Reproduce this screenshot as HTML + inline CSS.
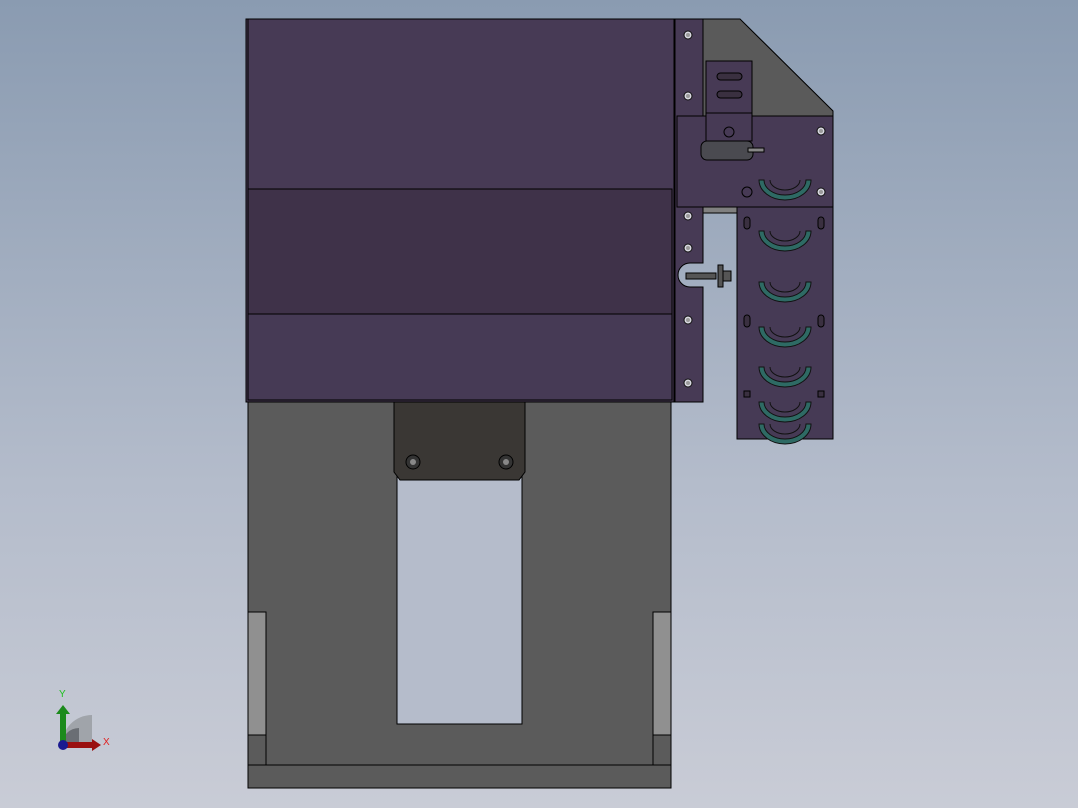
<!DOCTYPE html>
<html><head><style>
html,body{margin:0;padding:0;width:1078px;height:808px;overflow:hidden}
body{background:linear-gradient(#8a9bb1,#b4bccb 60%,#c9ccd6)}
svg{position:absolute;left:0;top:0}
</style></head><body>
<svg width="1078" height="808" viewBox="0 0 1078 808">
<defs>
<g id="arc"><path d="M-26,-8 A26,20 0 0 0 26,-8 L21,-8 A21,15 0 0 1 -21,-8Z" fill="#2e6a64" stroke="#111" stroke-width="1"/><path d="M-15,-8 A15,10 0 0 0 15,-8" fill="none" stroke="#111"/></g>
<g id="hole"><circle r="4" fill="#d8d8e0" stroke="#111"/><circle r="2" fill="#999"/></g>
</defs>
<!-- gray base -->
<rect x="248" y="402" width="423" height="386" fill="#5b5b5b" stroke="#000"/>
<line x1="248" y1="765" x2="671" y2="765" stroke="#000"/>
<rect x="248" y="612" width="18" height="123" fill="#909090" stroke="#000"/>
<rect x="248" y="735" width="18" height="30" fill="none" stroke="#000"/>
<rect x="653" y="612" width="18" height="123" fill="#909090" stroke="#000"/>
<rect x="653" y="735" width="18" height="30" fill="none" stroke="#000"/>
<rect x="397" y="470" width="125" height="254" fill="#b5bccb" stroke="#000"/>
<path d="M394,402 H525 V472 L519,480 H400 L394,472Z" fill="#3a3734" stroke="#000"/>
<circle cx="413" cy="462" r="7" fill="#333" stroke="#000"/><circle cx="413" cy="462" r="3" fill="#888"/>
<circle cx="506" cy="462" r="7" fill="#333" stroke="#000"/><circle cx="506" cy="462" r="3" fill="#888"/>
<!-- purple block -->
<rect x="246" y="19" width="428" height="383" fill="#473a55" stroke="#000"/>
<rect x="248" y="189" width="424" height="125" fill="#3f3249" stroke="#000"/>
<rect x="248" y="314" width="424" height="86" fill="#463a55" stroke="#000"/>
<line x1="248" y1="19" x2="248" y2="400" stroke="#000"/>
<!-- right gray triangle -->
<path d="M700,19 H740 L833,111 V120 H700Z" fill="#5a5a5a" stroke="#000"/>
<!-- vertical strip -->
<path d="M675,19 H703 V263 H690 A12,12 0 0 0 690,287 H703 V402 H675Z" fill="#473a55" stroke="#000"/>
<use href="#hole" x="688" y="35"/><use href="#hole" x="688" y="96"/><use href="#hole" x="688" y="216"/><use href="#hole" x="688" y="248"/><use href="#hole" x="688" y="320"/><use href="#hole" x="688" y="383"/>
<!-- upper plate -->
<rect x="677" y="116" width="156" height="91" fill="#473a55" stroke="#000"/>
<rect x="703" y="207" width="34" height="6" fill="#808080" stroke="#000"/>
<rect x="706" y="61" width="46" height="80" fill="#473a55" stroke="#000"/>
<line x1="706" y1="113" x2="752" y2="113" stroke="#000"/>
<rect x="717" y="73" width="25" height="7" rx="3.5" fill="#3a3040" stroke="#000"/>
<rect x="717" y="91" width="25" height="7" rx="3.5" fill="#3a3040" stroke="#000"/>
<circle cx="729" cy="132" r="5" fill="none" stroke="#000"/>
<rect x="701" y="141" width="52" height="19" rx="6" fill="#4a4a50" stroke="#000"/>
<rect x="748" y="148" width="16" height="4" fill="#888" stroke="#000"/>
<use href="#hole" x="821" y="131"/><use href="#hole" x="821" y="192"/>
<circle cx="747" cy="192" r="5" fill="none" stroke="#000"/>
<use href="#arc" x="785" y="188"/>
<!-- lower plate -->
<rect x="737" y="207" width="96" height="232" fill="#463a55" stroke="#000"/>
<use href="#arc" x="785" y="239"/><use href="#arc" x="785" y="290"/><use href="#arc" x="785" y="335"/><use href="#arc" x="785" y="375"/><use href="#arc" x="785" y="410"/><use href="#arc" x="785" y="432"/>
<g fill="#3a3040" stroke="#000"><rect x="744" y="217" width="6" height="12" rx="3"/><rect x="818" y="217" width="6" height="12" rx="3"/><rect x="744" y="315" width="6" height="12" rx="3"/><rect x="818" y="315" width="6" height="12" rx="3"/><rect x="744" y="391" width="6" height="6"/><rect x="818" y="391" width="6" height="6"/></g>
<!-- bolt -->
<rect x="686" y="273" width="30" height="6" fill="#555" stroke="#000"/>
<rect x="718" y="265" width="5" height="22" fill="#555" stroke="#000"/>
<rect x="723" y="271" width="8" height="10" fill="#555" stroke="#000"/>
<!-- axes -->
<path d="M62,745 A30,30 0 0 1 92,715 V745Z" fill="#a0a4aa"/>
<path d="M62,745 A17,17 0 0 1 79,728 V745Z" fill="#6a6e74"/>
<rect x="60" y="712" width="6" height="33" fill="#1c8a1c"/>
<path d="M56,714 L63,705 L70,714Z" fill="#1c8a1c"/>
<rect x="62" y="742" width="32" height="6" fill="#9a1010"/>
<path d="M92,739 L101,745 L92,751Z" fill="#9a1010"/>
<circle cx="63" cy="745" r="5" fill="#1a1a90"/>
<text x="59" y="697" fill="#20c020" font-family="Liberation Sans,sans-serif" font-size="10">Y</text>
<text x="103" y="745" fill="#e02020" font-family="Liberation Sans,sans-serif" font-size="10">X</text>
</svg>
</body></html>
